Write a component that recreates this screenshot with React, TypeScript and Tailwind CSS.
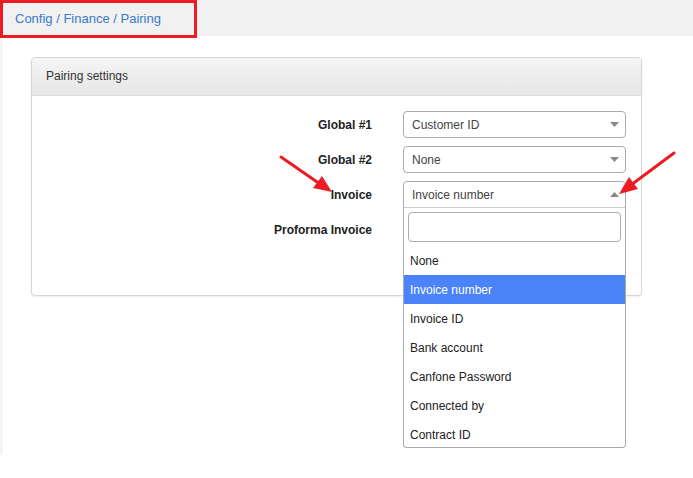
import React from "react";

const font = { fontFamily: '"Liberation Sans", Arial, Helvetica, sans-serif' };

function Caret({ up = false }: { up?: boolean }) {
  return (
    <svg width="9" height="5" viewBox="0 0 9 5" className="shrink-0">
      {up ? <path d="M0 5 L4.5 0 L9 5 Z" fill="#888" /> : <path d="M0 0 L9 0 L4.5 5 Z" fill="#888" />}
    </svg>
  );
}

function Select({ value }: { value: string }) {
  return (
    <div className="w-[223px] h-[27px] border border-[#aaa] rounded-[4px] bg-white flex items-center justify-between pl-[8px] pr-[6px] text-[12px] text-[#444]">
      <span>{value}</span>
      <Caret />
    </div>
  );
}

const options = ["None", "Invoice number", "Invoice ID", "Bank account", "Canfone Password", "Connected by", "Contract ID"];

function Row({ label, children }: { label: string; children: React.ReactNode }) {
  return (
    <div className="flex items-center h-[27px]">
      <div className="w-[340px] text-right font-bold text-[12px] text-[#222]">{label}</div>
      <div className="ml-[31px] relative">{children}</div>
    </div>
  );
}

export default function App() {
  return (
    <div className="relative w-[693px] h-[478px] bg-white overflow-hidden" style={font}>
      <div className="h-[36px] bg-[#f1f1f1] flex items-start">
        <div className="h-[38px] w-[197px] border-[3px] border-[#ec1c24] flex items-center pl-[12px] text-[13px] text-[#3a7bc8] relative z-10">
          Config / Finance / Pairing
        </div>
      </div>
      <div className="h-[419px] border-l-[3px] border-[#f4f4f4] pt-[21px] pl-[28px]">
        <div className="w-[611px] h-[239px] border border-[#d6d6d6] rounded-[4px] shadow-[0_1px_2px_rgba(0,0,0,0.08)] bg-white">
          <div className="h-[38px] bg-gradient-to-b from-[#f5f5f5] to-[#e6e6e6] border-b border-[#dcdcdc] rounded-t-[4px] flex items-center pl-[14px] pb-[2px] text-[12px] text-[#333]">
            Pairing settings
          </div>
          <div className="pt-[15px] flex flex-col gap-[8px]">
            <Row label="Global #1">
              <Select value="Customer ID" />
            </Row>
            <Row label="Global #2">
              <Select value="None" />
            </Row>
            <Row label="Invoice">
              <div className="w-[223px] h-[27px] border border-[#aaa] rounded-t-[4px] bg-white flex items-center justify-between pl-[8px] pr-[6px] text-[12px] text-[#444]">
                <span>Invoice number</span>
                <Caret up />
              </div>
              <div className="absolute left-0 top-[26px] w-[223px] h-[241px] border border-[#aaa] border-t-[#ccc] rounded-b-[4px] bg-white z-20 flex flex-col">
                <div className="px-[4px] pt-[4px]">
                  <div className="h-[30px] border border-[#aaa] rounded-[4px]" />
                </div>
                <div className="mt-[4px] flex flex-col">
                  {options.map((o) => (
                    <div
                      key={o}
                      className={
                        "h-[29px] flex items-center pl-[6px] text-[12px] " +
                        (o === "Invoice number" ? "bg-[#4a83fa] text-white" : "text-[#222]")
                      }
                    >
                      {o}
                    </div>
                  ))}
                </div>
              </div>
            </Row>
            <Row label="Proforma Invoice">
              <div className="w-[223px] h-[27px]" />
            </Row>
          </div>
        </div>
      </div>
      <svg className="absolute left-0 top-0 pointer-events-none z-30" width="693" height="478">
        <line x1="281" y1="157" x2="320" y2="184" stroke="#ec1c24" strokeWidth="3" strokeLinecap="round" />
        <polygon points="332,192 313,188 322,176" fill="#ec1c24" />
        <line x1="674" y1="153" x2="631" y2="185" stroke="#ec1c24" strokeWidth="3" strokeLinecap="round" />
        <polygon points="619,194 629,177 638,189" fill="#ec1c24" />
      </svg>
    </div>
  );
}
